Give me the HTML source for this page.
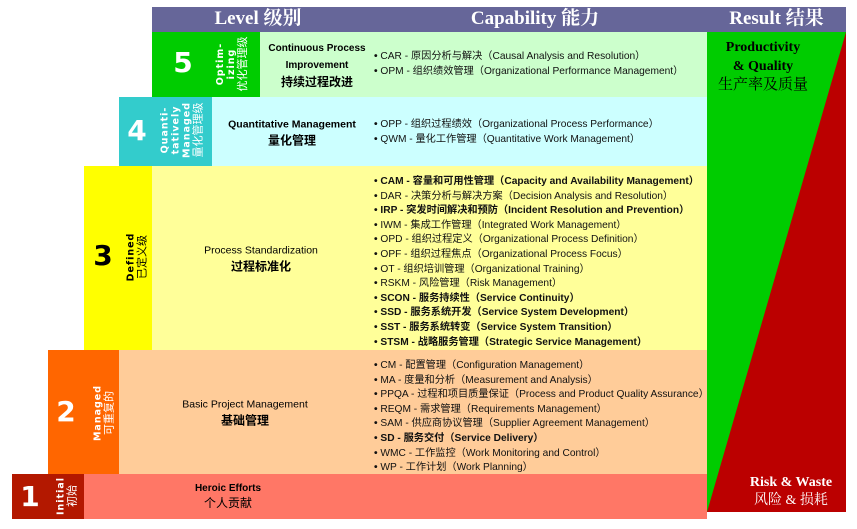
<!DOCTYPE html>
<html><head><meta charset="utf-8"><style>
*{margin:0;padding:0;box-sizing:border-box}
body{width:857px;height:529px;background:#fff;position:relative;overflow:hidden;font-family:"Liberation Sans","Noto Sans CJK SC",sans-serif}
.a{position:absolute}
.hd{font-family:"Liberation Serif","Noto Serif CJK SC",serif;font-weight:bold;color:#fff;font-size:19px;top:6px;line-height:26px;text-align:center}
.num{font-family:"DejaVu Sans","Liberation Sans",sans-serif;font-weight:bold;font-size:28px;line-height:30px;text-align:center}
.vl{position:absolute;transform:translate(-50%,-50%) rotate(-90deg);white-space:nowrap;text-align:center;font-size:9.5px;line-height:11px;font-weight:bold;letter-spacing:1px;font-family:"DejaVu Sans","Noto Sans CJK SC",sans-serif}
.vl .c{font-size:11px;letter-spacing:0;font-weight:normal;font-family:"Noto Sans CJK SC",sans-serif}
.tt{position:absolute;transform:translate(-50%,-50%);text-align:center;font-size:10.5px;line-height:16px;color:#000;white-space:nowrap}
.tt b{font-weight:bold}
.ul{position:absolute;left:374px;font-size:10.2px;line-height:14.6px;color:#111;white-space:nowrap}
.ul div::before{content:"• ";font-weight:bold}
.ul .b{font-weight:bold}
</style></head><body>
<div class="a" style="left:152px;top:7px;width:694px;height:25px;background:#666699"></div>
<div class="a hd" style="left:152px;width:212px">Level 级别</div>
<div class="a hd" style="left:430px;width:210px">Capability 能力</div>
<div class="a hd" style="left:707px;width:139px">Result 结果</div>

<!-- row5 -->
<div class="a" style="left:152px;top:32px;width:108px;height:65px;background:#00cc00"></div>
<div class="a" style="left:260px;top:32px;width:447px;height:65px;background:#ccffcc"></div>
<div class="a num" style="left:168px;top:48px;width:30px;color:#fff">5</div>
<div class="vl" style="left:232px;top:64px;color:#fff">Optim-<br>izing<br><span class="c">优化管理级</span></div>
<div class="tt" style="left:317px;top:66px;font-size:10px;line-height:17px"><b>Continuous Process<br>Improvement</b><br><b style="font-size:12px">持续过程改进</b></div>
<div class="ul" style="top:50px"><div>CAR - 原因分析与解决（Causal Analysis and Resolution）</div><div>OPM - 组织绩效管理（Organizational Performance Management）</div></div>

<!-- row4 -->
<div class="a" style="left:119px;top:97px;width:93px;height:69px;background:#33cccc"></div>
<div class="a" style="left:212px;top:97px;width:495px;height:69px;background:#ccffff"></div>
<div class="a num" style="left:122px;top:116px;width:30px;color:#fff">4</div>
<div class="vl" style="left:182px;top:130px;color:#fff">Quanti-<br>tatively<br>Managed<br><span class="c">量化管理级</span></div>
<div class="tt" style="left:292px;top:133px"><b>Quantitative Management</b><br><b style="font-size:12px">量化管理</b></div>
<div class="ul" style="top:118px"><div>OPP - 组织过程绩效（Organizational Process Performance）</div><div>QWM - 量化工作管理（Quantitative Work Management）</div></div>

<!-- row3 -->
<div class="a" style="left:84px;top:166px;width:68px;height:184px;background:#ffff00"></div>
<div class="a" style="left:152px;top:166px;width:555px;height:184px;background:#ffff99"></div>
<div class="a num" style="left:88px;top:241px;width:30px;color:#000">3</div>
<div class="vl" style="left:137px;top:257px;color:#000">Defined<br><span class="c">已定义级</span></div>
<div class="tt" style="left:261px;top:259px"><span>Process Standardization</span><br><b style="font-size:12px">过程标准化</b></div>
<div class="ul" style="top:175px">
<div class="b">CAM - 容量和可用性管理（Capacity and Availability Management）</div>
<div>DAR - 决策分析与解决方案（Decision Analysis and Resolution）</div>
<div class="b">IRP - 突发时间解决和预防（Incident Resolution and Prevention）</div>
<div>IWM - 集成工作管理（Integrated Work Management）</div>
<div>OPD - 组织过程定义（Organizational Process Definition）</div>
<div>OPF - 组织过程焦点（Organizational Process Focus）</div>
<div>OT - 组织培训管理（Organizational Training）</div>
<div>RSKM - 风险管理（Risk Management）</div>
<div class="b">SCON - 服务持续性（Service Continuity）</div>
<div class="b">SSD - 服务系统开发（Service System Development）</div>
<div class="b">SST - 服务系统转变（Service System Transition）</div>
<div class="b">STSM - 战略服务管理（Strategic Service Management）</div>
</div>

<!-- row2 -->
<div class="a" style="left:48px;top:350px;width:71px;height:124px;background:#ff6600"></div>
<div class="a" style="left:119px;top:350px;width:588px;height:124px;background:#ffcc99"></div>
<div class="a num" style="left:51px;top:397px;width:30px;color:#fff">2</div>
<div class="vl" style="left:104px;top:413px;color:#fff">Managed<br><span class="c">可重复的</span></div>
<div class="tt" style="left:245px;top:413px"><span>Basic Project Management</span><br><b style="font-size:12px">基础管理</b></div>
<div class="ul" style="top:359px">
<div>CM - 配置管理（Configuration Management）</div>
<div>MA - 度量和分析（Measurement and Analysis）</div>
<div>PPQA - 过程和项目质量保证（Process and Product Quality Assurance）</div>
<div>REQM - 需求管理（Requirements Management）</div>
<div>SAM - 供应商协议管理（Supplier Agreement Management）</div>
<div class="b">SD - 服务交付（Service Delivery）</div>
<div>WMC - 工作监控（Work Monitoring and Control）</div>
<div>WP - 工作计划（Work Planning）</div>
</div>

<!-- row1 -->
<div class="a" style="left:12px;top:474px;width:72px;height:45px;background:#b31800"></div>
<div class="a" style="left:84px;top:474px;width:623px;height:45px;background:#ff7766"></div>
<div class="a num" style="left:15px;top:482px;width:30px;color:#fff">1</div>
<div class="vl" style="left:67px;top:496px;color:#fff">Initial<br><span class="c">初始</span></div>
<div class="tt" style="left:228px;top:497px;font-size:10px;line-height:14px"><b>Heroic Efforts</b><br><span style="font-size:12px">个人贡献</span></div>

<!-- result -->
<svg class="a" style="left:707px;top:32px" width="139" height="480"><rect width="139" height="480" fill="#00cc00"/><polygon points="139,0 139,480 0,480" fill="#bb0000"/></svg>
<div class="a" style="left:707px;top:38px;width:112px;text-align:center;font-family:'Liberation Serif','Noto Serif CJK SC',serif;font-weight:bold;font-size:14px;line-height:19px;color:#000">Productivity<br>&amp; Quality<br><span style="font-weight:normal;font-size:15px">生产率及质量</span></div>
<div class="a" style="left:736px;top:474px;width:110px;text-align:center;font-family:'Liberation Serif','Noto Serif CJK SC',serif;font-weight:bold;font-size:14px;line-height:18px;color:#fff">Risk &amp; Waste<br><span style="font-weight:normal">风险 &amp; 损耗</span></div>
</body></html>
